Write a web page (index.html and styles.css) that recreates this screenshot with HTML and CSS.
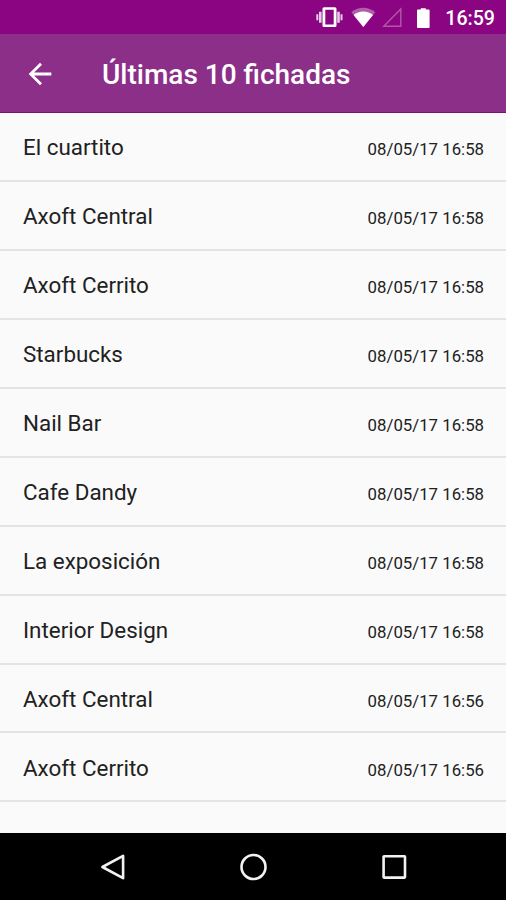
FILE: index.html
```
<!DOCTYPE html>
<html lang="es">
<head>
    <meta charset="UTF-8">
    <meta name="viewport" content="width=device-width, initial-scale=1.0">
    <title>Últimas 10 fichadas</title>
    <link rel="stylesheet" href="styles.css">
</head>
<body>
    <div class="status-bar">
        <svg class="status-icons" width="118" height="34" viewBox="0 0 118 34">
            <!-- vibrate -->
            <path fill="#fff" fill-rule="evenodd" d="M8 7.300h11a1.500 1.500 0 0 1 1.500 1.500v16.700a1.500 1.500 0 0 1-1.500 1.500h-11A1.500 1.500 0 0 1 6.500 25.500V8.800a1.500 1.500 0 0 1 1.500-1.500zM9.300 9.800v14.700h8.400V9.800z"/>
            <path fill="#fff" opacity=".8" d="M.3 14.300h2v6h-2zM3 11.800h2.600v11H3zM21.200 11.800h2.600v11h-2.600zM24.500 14.300h2v6h-2z"/>
            <!-- wifi -->
            <path fill="#fff" opacity=".35" d="M47.300 27 35.300 12.300C38.700 9.400 42.800 7.800 47.300 7.800s8.600 1.600 12 4.500z"/>
            <path fill="#fff" d="M47.300 27 37.600 15.100c2.700-2.200 6-3.500 9.700-3.500s7 1.300 9.700 3.500z"/>
            <!-- signal -->
            <path fill="none" stroke="#fff" stroke-width="1.400" opacity=".33" d="M67.800 26.300H84.800V9z"/>
            <!-- battery -->
            <path fill="#fff" d="M102 9.500h2.800V8.300h5v1.200h2.800q1 0 1 1V27q0 1-1 1H102q-1 0-1-1V10.500q0-1 1-1z"/>
        </svg>
        <span class="clock">16:59</span>
    </div>
    <header class="toolbar">
        <svg class="back" width="34" height="34" viewBox="0 0 24 24">
            <path fill="#fff" d="M20 11H7.830l5.590-5.590L12 4l-8 8 8 8 1.410-1.410L7.830 13H20v-2z"/>
        </svg>
        <h1>Últimas 10 fichadas</h1>
    </header>
    <ul class="list">
        <li class="row"><span class="name">El cuartito</span><span class="date">08/05/17 16:58</span></li>
        <li class="row"><span class="name">Axoft Central</span><span class="date">08/05/17 16:58</span></li>
        <li class="row"><span class="name">Axoft Cerrito</span><span class="date">08/05/17 16:58</span></li>
        <li class="row"><span class="name">Starbucks</span><span class="date">08/05/17 16:58</span></li>
        <li class="row"><span class="name">Nail Bar</span><span class="date">08/05/17 16:58</span></li>
        <li class="row"><span class="name">Cafe Dandy</span><span class="date">08/05/17 16:58</span></li>
        <li class="row"><span class="name">La exposición</span><span class="date">08/05/17 16:58</span></li>
        <li class="row"><span class="name">Interior Design</span><span class="date">08/05/17 16:58</span></li>
        <li class="row"><span class="name">Axoft Central</span><span class="date">08/05/17 16:56</span></li>
        <li class="row"><span class="name">Axoft Cerrito</span><span class="date">08/05/17 16:56</span></li>
    </ul>
    <nav class="nav-bar">
        <svg width="30" height="30" viewBox="0 0 30 30"><path d="M5.400 15 26.100 3.800V26.200z"/></svg>
        <svg width="30" height="30" viewBox="0 0 30 30"><circle cx="15.500" cy="15" r="12"/></svg>
        <svg width="30" height="30" viewBox="0 0 30 30"><rect x="4.600" y="4.200" width="21.400" height="21.400" rx=".5"/></svg>
    </nav>
</body>
</html>
```
FILE: styles.css
```
* {
    margin: 0;
    padding: 0;
    box-sizing: border-box;
}

body {
    display: flex;
    flex-direction: column;
    height: 900px;
    overflow: hidden;
    background: #fafafa;
    color: #212121;
    font-family: Roboto, sans-serif;
}

.status-bar {
    display: flex;
    align-items: center;
    justify-content: flex-end;
    height: 34px;
    padding-right: 11px;
    background: #8b0582;
}

.status-icons {
    margin-right: 11px;
}

.clock {
    color: #fff;
    font-size: 19.6px;
    font-weight: 500;
    line-height: 34px;
    padding-top: 3px;
}

.toolbar {
    display: flex;
    align-items: center;
    height: 79px;
    padding: 1px 0 0 23px;
    background: #8b2f88;
    border-bottom: 1px solid #7d1078;
    color: #fff;
}

.toolbar h1 {
    margin-left: 45px;
    font-size: 28px;
    font-weight: 500;
    line-height: 34px;
    padding-top: 3px;
}

.list {
    flex: 1;
    list-style: none;
}

.row {
    display: flex;
    align-items: center;
    justify-content: space-between;
    height: 68.95px;
    padding: 2px 22px 0 23px;
    border-bottom: 2px solid #e4e4e4;
}

.name {
    font-size: 22.4px;
}

.date {
    font-size: 16.8px;
    padding-top: 4px;
}

.nav-bar {
    display: flex;
    align-items: center;
    justify-content: center;
    gap: 111px;
    height: 67px;
    background: #000;
}

.nav-bar svg {
    fill: none;
    stroke: #f2f2f2;
    stroke-width: 2.6;
    stroke-linejoin: round;
}
```
